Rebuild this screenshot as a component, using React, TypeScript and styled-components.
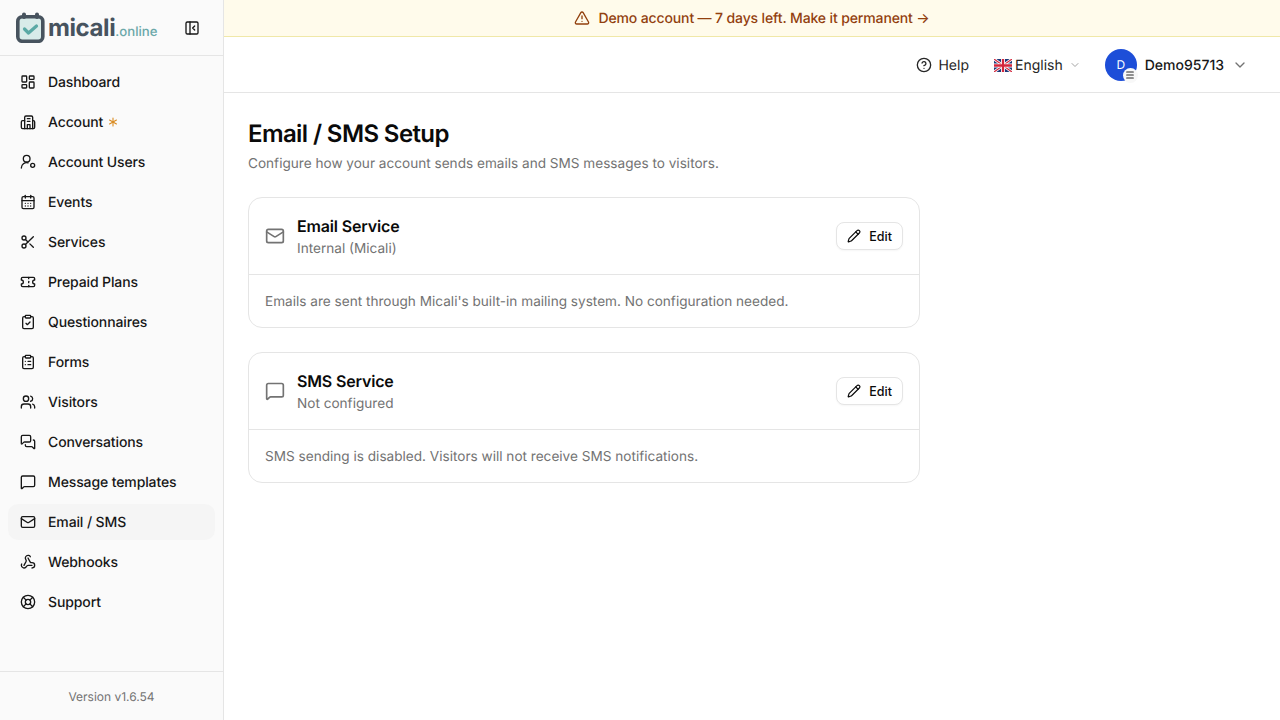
import styled, { createGlobalStyle } from "styled-components";
import {
  Asterisk,
  CalendarDays,
  ChevronDown,
  CircleHelp,
  ClipboardCheck,
  ClipboardList,
  LayoutDashboard,
  LifeBuoy,
  Mail,
  Menu,
  MessageSquare,
  MessagesSquare,
  PanelLeftClose,
  Pencil,
  Scissors,
  Ticket,
  TriangleAlert,
  Users,
  Webhook,
} from "lucide-react";

const GlobalStyle = createGlobalStyle`
  * { box-sizing: border-box; }
  body {
    margin: 0;
    font-family: Inter, "Liberation Sans", sans-serif;
    color: #0a0a0a;
    background: #fff;
    text-rendering: geometricPrecision;
    -webkit-font-smoothing: antialiased;
  }
`;

const Shell = styled.div`
  display: flex;
  width: 1280px;
  height: 720px;
  overflow: hidden;
`;

const Sidebar = styled.aside`
  width: 224px;
  flex-shrink: 0;
  display: flex;
  flex-direction: column;
  background: #fafafa;
  border-right: 1px solid #e5e5e5;
`;

const Brand = styled.div`
  height: 56px;
  display: flex;
  align-items: center;
  justify-content: space-between;
  padding: 0 23px 0 16px;
  border-bottom: 1px solid #e5e5e5;
`;

const Logo = styled.div`
  display: flex;
  align-items: center;
`;

const LogoName = styled.span`
  margin-left: 3px;
  font-size: 24px;
  line-height: 28px;
  font-weight: 700;
  letter-spacing: -0.4px;
  color: #47535e;
`;

const LogoTld = styled.span`
  font-size: 13.2px;
  font-weight: 500;
  color: #6ba8a9;
  position: relative;
  top: 4px;
`;

const Nav = styled.nav`
  flex: 1;
  display: flex;
  flex-direction: column;
  gap: 4px;
  padding: 8px;
`;

const NavItem = styled.a<{ $active?: boolean }>`
  height: 36px;
  display: flex;
  align-items: center;
  gap: 12px;
  padding: 0 12px;
  border-radius: 10px;
  font-size: 14px;
  font-weight: 500;
  letter-spacing: -0.12px;
  color: #171717;
  background: ${(p) => (p.$active ? "#f5f5f5" : "transparent")};
  svg { flex-shrink: 0; }
`;

const Star = styled.span`
  display: flex;
  margin-left: -10px;
  color: #d98a1f;
`;

const Version = styled.div`
  height: 49px;
  display: flex;
  align-items: center;
  justify-content: center;
  border-top: 1px solid #e5e5e5;
  font-size: 12px;
  color: #737373;
`;

const Content = styled.div`
  flex: 1;
  display: flex;
  flex-direction: column;
  min-width: 0;
`;

const Banner = styled.div`
  height: 37px;
  display: flex;
  align-items: center;
  justify-content: center;
  gap: 8px;
  background: #fffbeb;
  border-bottom: 1px solid #f0e8a8;
  font-size: 14px;
  font-weight: 500;
  letter-spacing: -0.13px;
  color: #92400e;
`;

const TopBar = styled.header`
  height: 56px;
  display: flex;
  align-items: center;
  justify-content: flex-end;
  padding: 0 32px 0 0;
  border-bottom: 1px solid #e5e5e5;
  font-size: 14px;
  font-weight: 400;
`;

const HelpLink = styled.span`
  display: flex;
  align-items: center;
  gap: 6px;
  padding-top: 1px;
  margin-right: 25px;
  color: #262626;
`;

const Language = styled.span`
  display: flex;
  align-items: center;
  padding-top: 1px;
  color: #262626;
  margin-right: 24px;
  svg:first-child { margin-right: 3px; }
  svg:last-child { margin-left: 6px; color: #a3a3a3; }
`;

const UserMenu = styled.span`
  display: flex;
  align-items: center;
  gap: 8px;
  color: #171717;
  svg { color: #737373; }
`;

const UserName = styled.span`
  margin-top: 1px;
  font-weight: 500;
`;

const Avatar = styled.span`
  position: relative;
  width: 32px;
  height: 32px;
  display: flex;
  align-items: center;
  justify-content: center;
  border-radius: 50%;
  background: #1d4ed8;
  color: #fff;
  font-size: 12px;
  font-weight: 400;
`;

const AvatarBadge = styled.span`
  position: absolute;
  right: -1px;
  bottom: -2px;
  width: 15px;
  height: 15px;
  display: flex;
  align-items: center;
  justify-content: center;
  border-radius: 50%;
  background: #f8f8f8;
  svg { color: #262626; }
`;

const Main = styled.main`
  flex: 1;
  padding: 24px;
`;

const Title = styled.h1`
  margin: 0;
  padding-top: 1px;
  font-size: 24px;
  line-height: 32px;
  font-weight: 600;
  letter-spacing: -0.6px;
`;

const Subtitle = styled.p`
  margin: 4px 0 0;
  font-size: 13.6px;
  line-height: 20px;
  color: #737373;
`;

const Cards = styled.div`
  display: flex;
  flex-direction: column;
  gap: 24px;
  width: 672px;
  margin-top: 23px;
`;

const Card = styled.section`
  border: 1px solid #e5e5e5;
  border-radius: 14px;
  background: #fff;
`;

const CardHead = styled.div`
  height: 77px;
  display: flex;
  align-items: center;
  gap: 12px;
  padding: 0 16px;
  border-bottom: 1px solid #e5e5e5;
  svg.service { color: #737373; flex-shrink: 0; }
`;

const CardTitles = styled.div`
  flex: 1;
  display: flex;
  flex-direction: column;
`;

const CardTitle = styled.div`
  font-size: 16px;
  line-height: 24px;
  font-weight: 600;
  letter-spacing: -0.16px;
`;

const CardSub = styled.div`
  margin-top: 1px;
  font-size: 13.6px;
  line-height: 20px;
  color: #737373;
`;

const EditButton = styled.button`
  height: 28px;
  display: flex;
  align-items: center;
  gap: 8px;
  padding: 0 10px;
  border: 1px solid #e5e5e5;
  border-radius: 8px;
  background: #fff;
  font-family: inherit;
  font-size: 12.5px;
  font-weight: 500;
  color: #0a0a0a;
  box-shadow: 0 1px 2px rgba(0, 0, 0, 0.04);
`;

const CardBody = styled.div`
  height: 52px;
  display: flex;
  align-items: center;
  padding: 1px 16px 0;
  font-size: 13.6px;
  color: #737373;
`;

const CalendarLogo = () => (
  <svg width="29" height="31" viewBox="0 0 29 31" fill="none">
    <rect x="1.8" y="4.8" width="25" height="24.5" rx="4.5" fill="#d8ebe9" stroke="#47535e" strokeWidth="3.6" />
    <path d="M8 5V2.5M21 5V2.5" stroke="#47535e" strokeWidth="4" strokeLinecap="round" />
    <path d="M8.5 17l4 4 8-7" stroke="#5aa9a5" strokeWidth="3.2" strokeLinecap="round" strokeLinejoin="round" />
  </svg>
);

const UkFlag = () => (
  <svg width="18" height="13" viewBox="0 0 19 13" preserveAspectRatio="none">
    <rect width="19" height="13" rx="1.5" fill="#1f3a7a" />
    <path d="M0 0l19 13M19 0L0 13" stroke="#fff" strokeWidth="2.8" />
    <path d="M0 0l19 13M19 0L0 13" stroke="#d3263c" strokeWidth="1.2" />
    <path d="M9.5 0v13M0 6.5h19" stroke="#fff" strokeWidth="4.2" />
    <path d="M9.5 0v13M0 6.5h19" stroke="#d3263c" strokeWidth="2.4" />
  </svg>
);

const AccountIcon = ({ size = 16 }: { size?: number }) => (
  <svg width={size} height={size} viewBox="0 0 24 24" fill="none" stroke="currentColor" strokeWidth="2" strokeLinecap="round" strokeLinejoin="round">
    <path d="M7 22V5a2 2 0 0 1 2-2h8a2 2 0 0 1 2 2v17" />
    <path d="M7 10H4a2 2 0 0 0-2 2v8a2 2 0 0 0 2 2h16a2 2 0 0 0 2-2v-8a2 2 0 0 0-2-2h-1" />
    <path d="M11 7h4M11 11h4M11 22v-6h4v6" />
  </svg>
);

const AccountUsersIcon = ({ size = 16 }: { size?: number }) => (
  <svg width={size} height={size} viewBox="0 0 24 24" fill="none" stroke="currentColor" strokeWidth="2" strokeLinecap="round" strokeLinejoin="round">
    <circle cx="10" cy="7" r="5" />
    <path d="M2 21a8 8 0 0 1 10-7.7" />
    <circle cx="19" cy="17" r="3" />
  </svg>
);

const navItems = [
  { label: "Dashboard", icon: LayoutDashboard },
  { label: "Account", icon: AccountIcon, star: true },
  { label: "Account Users", icon: AccountUsersIcon },
  { label: "Events", icon: CalendarDays },
  { label: "Services", icon: Scissors },
  { label: "Prepaid Plans", icon: Ticket },
  { label: "Questionnaires", icon: ClipboardCheck },
  { label: "Forms", icon: ClipboardList },
  { label: "Visitors", icon: Users },
  { label: "Conversations", icon: MessagesSquare },
  { label: "Message templates", icon: MessageSquare },
  { label: "Email / SMS", icon: Mail, active: true },
  { label: "Webhooks", icon: Webhook },
  { label: "Support", icon: LifeBuoy },
];

const services = [
  {
    title: "Email Service",
    sub: "Internal (Micali)",
    body: "Emails are sent through Micali's built-in mailing system. No configuration needed.",
    icon: Mail,
  },
  {
    title: "SMS Service",
    sub: "Not configured",
    body: "SMS sending is disabled. Visitors will not receive SMS notifications.",
    icon: MessageSquare,
  },
];

function App() {
  return (
    <Shell>
      <GlobalStyle />
      <Sidebar>
        <Brand>
          <Logo>
            <CalendarLogo />
            <LogoName>micali</LogoName>
            <LogoTld>.online</LogoTld>
          </Logo>
          <PanelLeftClose size={16} color="#171717" />
        </Brand>
        <Nav>
          {navItems.map((item) => (
            <NavItem key={item.label} $active={item.active}>
              <item.icon size={16} />
              {item.label}
              {item.star && (
                <Star>
                  <Asterisk size={16} strokeWidth={1.6} />
                </Star>
              )}
            </NavItem>
          ))}
        </Nav>
        <Version>Version v1.6.54</Version>
      </Sidebar>
      <Content>
        <Banner>
          <TriangleAlert size={16} />
          Demo account — 7 days left. Make it permanent →
        </Banner>
        <TopBar>
          <HelpLink>
            <CircleHelp size={16} />
            Help
          </HelpLink>
          <Language>
            <UkFlag />
            English
            <ChevronDown size={12} />
          </Language>
          <UserMenu>
            <Avatar>
              D
              <AvatarBadge>
                <Menu size={10} strokeWidth={2.5} />
              </AvatarBadge>
            </Avatar>
            <UserName>Demo95713</UserName>
            <ChevronDown size={16} />
          </UserMenu>
        </TopBar>
        <Main>
          <Title>Email / SMS Setup</Title>
          <Subtitle>Configure how your account sends emails and SMS messages to visitors.</Subtitle>
          <Cards>
            {services.map((s) => (
              <Card key={s.title}>
                <CardHead>
                  <s.icon className="service" size={20} />
                  <CardTitles>
                    <CardTitle>{s.title}</CardTitle>
                    <CardSub>{s.sub}</CardSub>
                  </CardTitles>
                  <EditButton>
                    <Pencil size={14} />
                    Edit
                  </EditButton>
                </CardHead>
                <CardBody>{s.body}</CardBody>
              </Card>
            ))}
          </Cards>
        </Main>
      </Content>
    </Shell>
  );
}

export default App;
